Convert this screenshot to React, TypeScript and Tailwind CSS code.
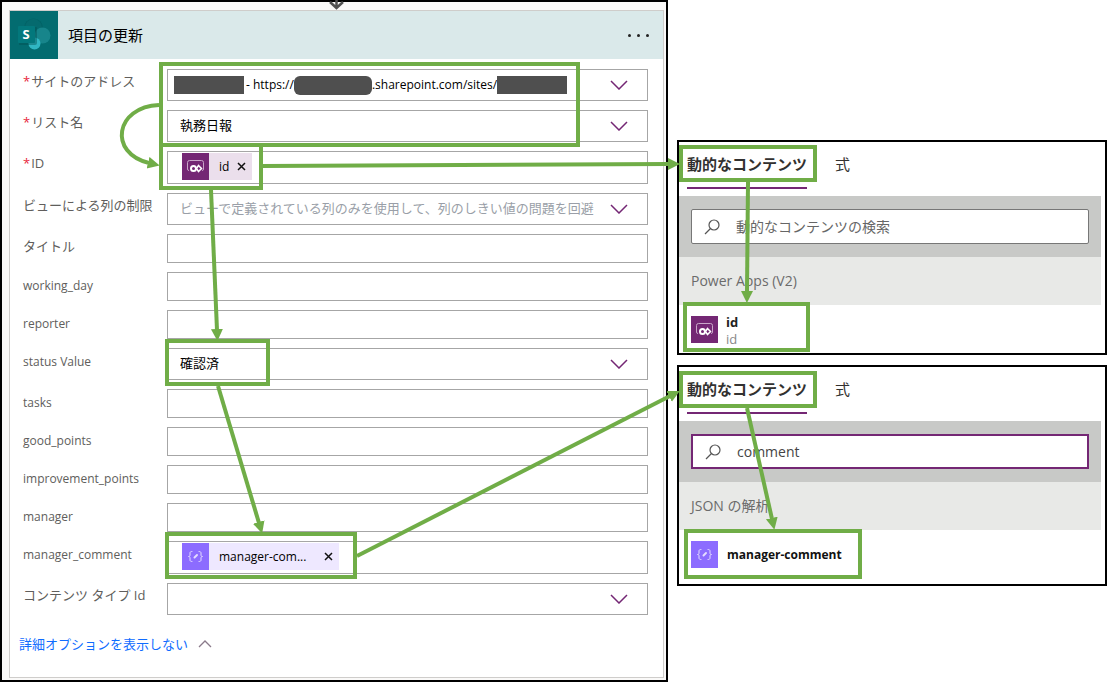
import type { ReactNode } from 'react';

const GREEN = '#70ad47';

const SharePointIcon = () => (
  <svg className="size-12 shrink-0 bg-[#036c70]" viewBox="0 0 48 48" aria-hidden="true">
    <circle cx="23.500" cy="17" r="9.500" fill="#03585c" opacity="0.5" />
    <circle cx="23.500" cy="16.500" r="8.500" fill="#056a6e" />
    <circle cx="32.500" cy="24.500" r="8" fill="#17858b" />
    <circle cx="24.500" cy="32.500" r="6" fill="#30b6c2" />
    <path d="M9 16h17a1 1 0 0 1 1 1v15a2 2 0 0 1-2 2H9z" fill="#024f52" opacity="0.45" />
    <rect x="8" y="15" width="17" height="17" rx="1" fill="#03787c" />
    <text x="16" y="28" textAnchor="middle" fill="#fff" fontSize="13" fontWeight="700">
      S
    </text>
  </svg>
);

const PowerAppsIcon = () => (
  <svg className="size-[27px] shrink-0 bg-[#742774]" viewBox="0 0 27 27" fill="none" aria-hidden="true">
    <path
      d="M7 17.500a1.500 1.500 0 0 1-1.500-1.500V9.500a2 2 0 0 1 2-2h12a2 2 0 0 1 2 2V16a1.500 1.500 0 0 1-1.500 1.500"
      stroke="#c9a6c9"
    />
    <circle cx="11.500" cy="15.500" r="2.500" stroke="#fff" strokeWidth="2" />
    <path d="M16.500 12.500l3 3-3 3-2-3z" stroke="#fff" strokeWidth="1.500" />
  </svg>
);

const JsonIcon = () => (
  <svg
    className="size-[27px] shrink-0 bg-[#8c6cff]"
    viewBox="0 0 27 27"
    fill="none"
    stroke="#e4dcff"
    strokeLinecap="round"
    aria-hidden="true"
  >
    <path d="M10 8.500c-1.500 0-2 .5-2 1.500v2c0 1-.5 1.500-1.500 1.500 1 0 1.500.5 1.500 1.500v2c0 1 .5 1.500 2 1.500" />
    <path d="M17 8.500c1.500 0 2 .5 2 1.500v2c0 1 .5 1.500 1.500 1.500-1 0-1.500.5-1.500 1.500v2c0 1-.5 1.500-2 1.500" />
    <path d="M12.500 14.500l2.500-2.500" strokeWidth="2" />
  </svg>
);

const Chevron = () => (
  <svg
    className="pointer-events-none absolute top-1/2 right-5 h-[10px] w-[18px] -translate-y-1/2"
    viewBox="0 0 18 10"
    fill="none"
    stroke="#742774"
    strokeWidth="1.500"
    aria-hidden="true"
  >
    <path d="M1 1l8 8 8-8" />
  </svg>
);

const SearchIcon = () => (
  <svg className="size-4 shrink-0" viewBox="0 0 16 16" fill="none" stroke="#555" strokeWidth="1.200" aria-hidden="true">
    <circle cx="10" cy="6" r="5" />
    <path d="M6.500 9.500L1 15" />
  </svg>
);

interface RowProps {
  id: string;
  label: string;
  required?: boolean;
  small?: boolean;
  children: ReactNode;
}

const Row = ({ id, label, required, small, children }: RowProps) => (
  <div className="flex items-start">
    <label
      htmlFor={id}
      className={`w-36 shrink-0 whitespace-nowrap text-[#605e5c] ${
        small ? 'text-[12px] leading-[27px]' : 'text-[13px] leading-[25px]'
      }`}
    >
      {required && <span className="mr-px text-[#e8253b]">*</span>}
      {label}
    </label>
    <div className="relative min-w-0 flex-1">{children}</div>
  </div>
);

const TextRow = ({ name, small = true }: { name: string; small?: boolean }) => (
  <Row id={name} label={name} small={small}>
    <input id={name} type="text" className="block h-[29px] w-full border border-[#a6a6a6] bg-white px-3" />
  </Row>
);

interface SelectRowProps {
  id: string;
  label: string;
  value: string;
  required?: boolean;
  small?: boolean;
  muted?: boolean;
}

const SelectRow = ({ id, label, value, required, small, muted }: SelectRowProps) => (
  <Row id={id} label={label} required={required} small={small}>
    <select
      id={id}
      className={`block h-8 w-full appearance-none border border-[#a6a6a6] bg-white pr-12 pl-3 ${
        muted ? 'text-[#9a9fa8]' : 'text-black'
      }`}
    >
      <option>{value}</option>
    </select>
    <Chevron />
  </Row>
);

const TokenRow = ({ id, label, required, small, children }: RowProps) => (
  <Row id={id} label={label} required={required} small={small}>
    <div className="flex h-[33px] items-start border border-[#a6a6a6] bg-white pt-px pl-[14px] text-[12px] text-black">
      {children}
      <input id={id} type="text" className="h-7 min-w-0 flex-1 outline-none" />
    </div>
  </Row>
);

const RemoveButton = ({ label }: { label: string }) => (
  <button type="button" aria-label={label}>
    <svg className="size-[9px]" viewBox="0 0 9 9" stroke="#111" strokeWidth="1.500" aria-hidden="true">
      <path d="M1 1l7 7M8 1l-7 7" />
    </svg>
  </button>
);

const UpdateItemCard = () => (
  <section className="border-2 border-black bg-[#faf9f8] pt-2 pr-[2px] pb-[2px] pl-[7px]">
    <div className="border border-[#cfcdcb] bg-white">
      <header className="flex items-center bg-[#dae9ea] pr-[10px]">
        <SharePointIcon />
        <h1 className="flex-1 pl-[10px] text-[15px] text-black">項目の更新</h1>
        <button type="button" aria-label="メニュー" className="flex gap-[6px] p-1">
          <span className="size-[3px] rounded-full bg-[#222]" />
          <span className="size-[3px] rounded-full bg-[#222]" />
          <span className="size-[3px] rounded-full bg-[#222]" />
        </button>
      </header>
      <div className="flex flex-col gap-[9px] pt-[10px] pr-[15px] pl-[13px]">
        <Row id="site" label="サイトのアドレス" required>
          <button
            id="site"
            type="button"
            className="flex h-8 w-full items-center border border-[#a6a6a6] bg-white pr-12 pl-[6px] text-[12px] whitespace-nowrap text-black"
          >
            <span className="h-[18px] w-[70px] bg-[#4f4f4f]" />
            <span className="pl-[2px]">- https://</span>
            <span className="h-[19px] w-[78px] rounded-md bg-[#4f4f4f]" />
            <span>.sharepoint.com/sites/</span>
            <span className="h-[18px] w-[70px] bg-[#4f4f4f]" />
          </button>
          <Chevron />
        </Row>
        <SelectRow id="list" label="リスト名" value="執務日報" required />
        <TokenRow id="item-id" label="ID" required>
          <span className="flex h-[27px] w-[70px] items-center bg-[#ebdfec]">
            <PowerAppsIcon />
            <span className="flex flex-1 items-center justify-between pr-[6px] pl-[10px]">
              id
              <RemoveButton label="id を削除" />
            </span>
          </span>
        </TokenRow>
        <SelectRow
          id="view"
          label="ビューによる列の制限"
          value="ビューで定義されている列のみを使用して、列のしきい値の問題を回避"
          muted
        />
        <TextRow name="タイトル" small={false} />
        <TextRow name="working_day" />
        <TextRow name="reporter" />
        <SelectRow id="status" label="status Value" value="確認済" small />
        <TextRow name="tasks" />
        <TextRow name="good_points" />
        <TextRow name="improvement_points" />
        <TextRow name="manager" />
        <TokenRow id="manager_comment" label="manager_comment" small>
          <span className="flex h-[27px] w-[157px] items-center bg-[#eee8ff]">
            <JsonIcon />
            <span className="flex flex-1 items-center justify-between pr-[6px] pl-[10px]">
              manager-com...
              <RemoveButton label="manager-comment を削除" />
            </span>
          </span>
        </TokenRow>
        <SelectRow id="content-type" label="コンテンツ タイプ Id" value="" />
      </div>
      <a href="#options" className="mt-[19px] mb-[23px] ml-[9px] flex w-fit items-center gap-[10px] leading-5 text-[#0f6cff]">
        詳細オプションを表示しない
        <svg className="h-2 w-[14px]" viewBox="0 0 14 8" fill="none" stroke="#8a7a8a" strokeWidth="1.300" aria-hidden="true">
          <path d="M1 7l6-6 6 6" />
        </svg>
      </a>
    </div>
  </section>
);

interface ContentPanelProps {
  id: string;
  group: string;
  query?: string;
  children: ReactNode;
}

const ContentPanel = ({ id, group, query, children }: ContentPanelProps) => (
  <section className="border-2 border-black bg-white pr-1">
    <div className="flex gap-7 pb-[7px] pl-2 text-[15px] text-[#323130]">
      <button type="button" className="h-[47px] border-b-2 border-[#742774] font-bold">
        動的なコンテンツ
      </button>
      <button type="button" className="h-[47px] border-b-2 border-transparent">
        式
      </button>
    </div>
    <div className="bg-[#c8c9c7] px-3 py-[13px]">
      <div
        className={`flex h-[35px] items-center gap-4 bg-white pl-3 ${
          query ? 'border-2 border-[#742774]' : 'rounded-xs border border-[#777]'
        }`}
      >
        <SearchIcon />
        <input
          id={id}
          type="text"
          aria-label="動的なコンテンツの検索"
          placeholder="動的なコンテンツの検索"
          defaultValue={query}
          className="h-full min-w-0 flex-1 text-[14px] text-[#444] outline-none placeholder:text-[#666]"
        />
      </div>
    </div>
    <h2 className="bg-[#e8e9e7] pl-3 text-[14px] leading-[48px] text-[#6b6b6b]">{group}</h2>
    {children}
  </section>
);

interface Box {
  x: number;
  y: number;
  w: number;
  h: number;
}

const boxes: Box[] = [
  { x: 161, y: 64, w: 417, h: 81 },
  { x: 161, y: 145, w: 100, h: 43 },
  { x: 167, y: 341, w: 101, h: 43 },
  { x: 167, y: 534, w: 188, h: 43 },
  { x: 681, y: 147, w: 134, h: 33 },
  { x: 685, y: 304, w: 123, h: 46 },
  { x: 681, y: 373, w: 134, h: 33 },
  { x: 686, y: 531, w: 174, h: 46 },
];

const arrows = [
  'M159 105C115 107 108 153 149 163',
  'M263 166L669 164',
  'M211 190L217 330',
  'M218 386L259 523',
  'M357 556L670 396',
  'M748 182L747 292',
  'M747 408L772 519',
];

const Annotations = () => (
  <svg
    className="pointer-events-none absolute inset-0 size-full"
    viewBox="0 0 1107 682"
    preserveAspectRatio="none"
    fill="none"
    aria-hidden="true"
  >
    <defs>
      <marker id="head" markerUnits="userSpaceOnUse" markerWidth="14" markerHeight="14" refX="1" refY="6" orient="auto">
        <path d="M0 0l12 6-12 6z" fill={GREEN} />
      </marker>
    </defs>
    <path d="M330 2l6.500 6L343 2M336.500 0v7" stroke="#505050" strokeWidth="2.500" />
    <g stroke={GREEN} strokeWidth="4">
      {boxes.map((b) => (
        <rect key={`${b.x}-${b.y}`} x={b.x} y={b.y} width={b.w} height={b.h} />
      ))}
      {arrows.map((d) => (
        <path key={d} d={d} markerEnd="url(#head)" />
      ))}
    </g>
  </svg>
);

export default function App() {
  return (
    <main className="relative grid grid-cols-[minmax(0,668fr)_minmax(0,430fr)] items-start gap-x-[9px] bg-white font-['Open_Sans','Noto_Sans_CJK_JP',sans-serif] text-[13px]">
      <UpdateItemCard />
      <div className="flex flex-col gap-[10px] pt-[140px]">
        <ContentPanel id="search-id" group="Power Apps (V2)">
          <div className="flex h-12 items-center gap-2 pl-3">
            <PowerAppsIcon />
            <div className="pt-[3px] leading-[17px]">
              <p className="font-bold text-[#222]">id</p>
              <p className="text-[#888]">id</p>
            </div>
          </div>
        </ContentPanel>
        <ContentPanel id="search-comment" group="JSON の解析" query="comment">
          <div className="flex h-[54px] items-start gap-[9px] pt-[11px] pl-3">
            <JsonIcon />
            <p className="text-[12px] leading-[27px] font-bold text-[#111]">manager-comment</p>
          </div>
        </ContentPanel>
      </div>
      <Annotations />
    </main>
  );
}
